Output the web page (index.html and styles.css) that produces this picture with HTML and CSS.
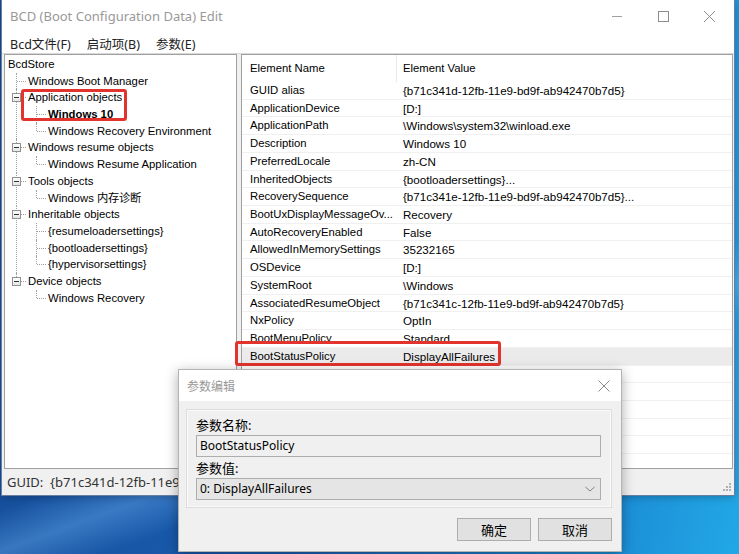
FILE: index.html
```html
<!DOCTYPE html>
<html lang="zh-CN">
<head>
    <meta charset="UTF-8">
    <title>BCD (Boot Configuration Data) Edit</title>
    <link rel="stylesheet" href="styles.css">
</head>
<body>
    <div class="desk">
        <div class="window">
            <div class="titlebar">
                <span class="title">BCD (Boot Configuration Data) Edit</span>
                <div class="caption-btns">
                    <svg width="46" height="32" viewBox="0 0 46 32"><path d="M18 16.5h10" stroke="#a0a0a0" stroke-width="1"/></svg>
                    <svg width="46" height="32" viewBox="0 0 46 32"><rect x="18.5" y="11.5" width="10" height="10" fill="none" stroke="#8c8c8c" stroke-width="1"/></svg>
                    <svg width="46" height="32" viewBox="0 0 46 32"><path d="M18 11l11 11M29 11L18 22" stroke="#8c8c8c" stroke-width="1"/></svg>
                </div>
            </div>
            <div class="menubar">
                <span>Bcd文件(F)</span>
                <span>启动项(B)</span>
                <span>参数(E)</span>
            </div>
            <div class="main">
                <div class="tree">
                    <div class="root">BcdStore</div>
                    <ul>
                        <li><span class="lbl">Windows Boot Manager</span></li>
                        <li><i class="exp"></i><span class="lbl">Application objects</span>
                            <ul>
                                <li><span class="lbl bold">Windows 10</span></li>
                                <li><span class="lbl">Windows Recovery Environment</span></li>
                            </ul>
                        </li>
                        <li><i class="exp"></i><span class="lbl">Windows resume objects</span>
                            <ul>
                                <li><span class="lbl">Windows Resume Application</span></li>
                            </ul>
                        </li>
                        <li><i class="exp"></i><span class="lbl">Tools objects</span>
                            <ul>
                                <li><span class="lbl">Windows 内存诊断</span></li>
                            </ul>
                        </li>
                        <li><i class="exp"></i><span class="lbl">Inheritable objects</span>
                            <ul>
                                <li><span class="lbl">{resumeloadersettings}</span></li>
                                <li><span class="lbl">{bootloadersettings}</span></li>
                                <li><span class="lbl">{hypervisorsettings}</span></li>
                            </ul>
                        </li>
                        <li><i class="exp"></i><span class="lbl">Device objects</span>
                            <ul>
                                <li><span class="lbl">Windows Recovery</span></li>
                            </ul>
                        </li>
                    </ul>
                </div>
                <div class="list">
                    <div class="lrow lhead"><span class="c1">Element Name</span><span class="c2">Element Value</span></div>
                    <div class="lrow"><span class="c1">GUID alias</span><span class="c2">{b71c341d-12fb-11e9-bd9f-ab942470b7d5}</span></div>
                    <div class="lrow"><span class="c1">ApplicationDevice</span><span class="c2">[D:]</span></div>
                    <div class="lrow"><span class="c1">ApplicationPath</span><span class="c2">\Windows\system32\winload.exe</span></div>
                    <div class="lrow"><span class="c1">Description</span><span class="c2">Windows 10</span></div>
                    <div class="lrow"><span class="c1">PreferredLocale</span><span class="c2">zh-CN</span></div>
                    <div class="lrow"><span class="c1">InheritedObjects</span><span class="c2">{bootloadersettings}...</span></div>
                    <div class="lrow"><span class="c1">RecoverySequence</span><span class="c2">{b71c341e-12fb-11e9-bd9f-ab942470b7d5}...</span></div>
                    <div class="lrow"><span class="c1">BootUxDisplayMessageOv...</span><span class="c2">Recovery</span></div>
                    <div class="lrow"><span class="c1">AutoRecoveryEnabled</span><span class="c2">False</span></div>
                    <div class="lrow"><span class="c1">AllowedInMemorySettings</span><span class="c2">35232165</span></div>
                    <div class="lrow"><span class="c1">OSDevice</span><span class="c2">[D:]</span></div>
                    <div class="lrow"><span class="c1">SystemRoot</span><span class="c2">\Windows</span></div>
                    <div class="lrow"><span class="c1">AssociatedResumeObject</span><span class="c2">{b71c341c-12fb-11e9-bd9f-ab942470b7d5}</span></div>
                    <div class="lrow"><span class="c1">NxPolicy</span><span class="c2">OptIn</span></div>
                    <div class="lrow"><span class="c1">BootMenuPolicy</span><span class="c2">Standard</span></div>
                    <div class="lrow sel"><span class="c1">BootStatusPolicy</span><span class="c2">DisplayAllFailures</span></div>
                    <div class="lrow"><span class="c1">HvPlatformCheck</span><span class="c2">True</span></div>
                    <div class="lrow"><span class="c1"></span><span class="c2"></span></div>
                    <div class="lrow"><span class="c1"></span><span class="c2"></span></div>
                    <div class="lrow"><span class="c1"></span><span class="c2"></span></div>
                    <div class="lrow"><span class="c1"></span><span class="c2"></span></div>
                    <div class="lrow"><span class="c1"></span><span class="c2"></span></div>
                </div>
            </div>
            <div class="status">
                <span class="guid">GUID:&nbsp;&nbsp;{b71c341d-12fb-11e9-bd9f-ab942470b7d5}</span>
                <svg class="grip" width="10" height="10" viewBox="0 0 10 10">
                    <rect x="7" y="1" width="2" height="2" fill="#b0b0b0"/>
                    <rect x="4" y="4" width="2" height="2" fill="#b0b0b0"/>
                    <rect x="7" y="4" width="2" height="2" fill="#b0b0b0"/>
                    <rect x="1" y="7" width="2" height="2" fill="#b0b0b0"/>
                    <rect x="4" y="7" width="2" height="2" fill="#b0b0b0"/>
                    <rect x="7" y="7" width="2" height="2" fill="#b0b0b0"/>
                </svg>
            </div>
        </div>

        <div class="mark mark-tree"></div>
        <div class="mark mark-row"></div>

        <div class="dialog">
            <div class="dlg-title">
                <span>参数编辑</span>
                <svg width="14" height="14" viewBox="0 0 14 14"><path d="M1.5 1.5l11 11M12.5 1.5l-11 11" stroke="#8a8a8a" stroke-width="1"/></svg>
            </div>
            <div class="dlg-body">
                <div class="group">
                    <div class="fld-label">参数名称:</div>
                    <div class="textbox">BootStatusPolicy</div>
                    <div class="fld-label">参数值:</div>
                    <div class="combo">
                        <span>0: DisplayAllFailures</span>
                        <svg width="12" height="8" viewBox="0 0 12 8"><path d="M1.5 2l4.5 4 4.5-4" fill="none" stroke="#808080" stroke-width="1"/></svg>
                    </div>
                </div>
                <div class="buttons">
                    <button class="btn">确定</button>
                    <button class="btn">取消</button>
                </div>
            </div>
        </div>
    </div>
</body>
</html>
```

FILE: styles.css
```css
html, body { margin: 0; padding: 0; }
body {
    width: 739px;
    height: 554px;
    overflow: hidden;
    background:
        linear-gradient(160deg, transparent 62%, rgba(120,190,255,0.35) 67%, transparent 72%),
        linear-gradient(100deg, #164c98 0%, #195db0 45%, #1a86d2 80%, #22a8e6 100%);
    font-family: "Liberation Sans", Arial, sans-serif;
}
.desk { position: relative; width: 739px; height: 554px; }

/* main window */
.window {
    margin-left: 2px;
    width: 732px;
    background: #f0f0f0;
    box-shadow: 0 0 0 1px #6a7fa0, 0 2px 8px #0004;
}
.titlebar {
    height: 33px;
    background: #fff;
    display: flex;
    align-items: center;
    justify-content: space-between;
}
.title {
    padding-left: 8px;
    font-family: "Noto Sans", "Noto Sans CJK SC", sans-serif;
    font-size: 13px;
    color: #999;
    margin-top: -1px;
}
.caption-btns { display: flex; align-self: flex-start; margin-right: 2px; }
.caption-btns svg { display: block; }

.menubar {
    height: 20px;
    background: #fff;
    display: flex;
    align-items: center;
    gap: 16px;
    padding-left: 8px;
    font-family: "Noto Sans", "Noto Sans CJK SC", sans-serif;
    font-size: 12.5px;
    color: #222;
    border-bottom: 1px solid #d8d8d8;
}

.main {
    display: flex;
    gap: 4px;
    height: 415px;
    padding-left: 2px;
    padding-right: 1px;
    box-sizing: border-box;
}

/* tree */
.tree {
    width: 233px;
    box-sizing: border-box;
    background: #fff;
    border: 1px solid #a0a0a0;
    padding-top: 1px;
    font-size: 11.3px;
    color: #000;
    overflow: hidden;
}
.tree .root { padding-left: 3px; height: 16.7px; line-height: 16.7px; }
.tree ul { list-style: none; margin: 0; padding: 0; }
.tree > ul { margin-left: 11px; }
.tree li { position: relative; padding-left: 12px; }
.tree li::before {
    content: "";
    position: absolute;
    left: 0; top: 0; bottom: 0;
    border-left: 1px dotted #a0a0a0;
}
.tree li:last-child::before { bottom: auto; height: 8px; }
.tree li::after {
    content: "";
    position: absolute;
    left: 1px; top: 8px;
    width: 9px;
    border-top: 1px dotted #a0a0a0;
}
.tree li ul { margin-left: 8px; }
.tree .lbl { display: block; height: 16.7px; line-height: 16.7px; white-space: nowrap; }
.tree .bold { font-weight: bold; }
.exp {
    position: absolute;
    left: -4px; top: 4px;
    width: 9px; height: 9px;
    box-sizing: border-box;
    border: 1px solid #919191;
    background: linear-gradient(#fff, #e6e6e6);
    z-index: 1;
}
.exp::after {
    content: "";
    position: absolute;
    left: 1px; right: 1px; top: 3px;
    height: 1px;
    background: #333;
}

/* list */
.list {
    flex: 1;
    background: #fff;
    border: 1px solid #a0a0a0;
    font-size: 11.3px;
    color: #000;
    overflow: hidden;
}
.lrow {
    display: grid;
    grid-template-columns: 155px 1fr;
    height: 17.73px;
    line-height: 17.73px;
    box-sizing: border-box;
    border-bottom: 1px solid #f0f0f0;
    white-space: nowrap;
}
.lrow .c1 { padding-left: 8px; overflow: hidden; }
.lrow .c2 { padding-left: 6px; overflow: hidden; font-size: 11.6px; }
.lhead { height: 27px; line-height: 27px; border-bottom: none; }
.lhead .c1 { border-right: 1px solid #e8e8e8; }
.lhead .c2 { font-size: 11.3px; }
.lrow.sel { background: #ebebeb; }

.status {
    height: 26px;
    display: flex;
    align-items: center;
    justify-content: space-between;
    padding-left: 5px;
    font-family: "Noto Sans", sans-serif;
    font-size: 13px;
    color: #333;
}
.guid { width: 171px; overflow: hidden; white-space: nowrap; }
.grip { align-self: flex-end; margin: 0 2px 3px 0; }

/* annotation boxes */
.mark {
    position: absolute;
    box-sizing: border-box;
    border: 3px solid #e2342c;
    border-radius: 3px;
}
.mark-tree { left: 21px; top: 89px; width: 106px; height: 32px; }
.mark-row { left: 235px; top: 341px; width: 266px; height: 25px; }

/* dialog */
.dialog {
    position: absolute;
    left: 178px; top: 369px;
    width: 444px; height: 183px;
    box-sizing: border-box;
    border: 1px solid #b4b4b4;
    background: #f0f0f0;
    box-shadow: 0 3px 12px #0005;
    font-family: "Noto Sans", "Noto Sans CJK SC", sans-serif;
}
.dlg-title {
    height: 31px;
    background: #fff;
    display: flex;
    align-items: center;
    justify-content: space-between;
    padding: 0 10px 0 8px;
    font-size: 12px;
    color: #999;
}
.dlg-body { padding: 8px 9px 0 7px; }
.group {
    border: 1px solid #dcdcdc;
    box-shadow: inset 0 0 0 1px #fafafa;
    padding: 6px 10px 7px 9px;
}
.fld-label { font-size: 13px; color: #000; line-height: 18px; }
.textbox, .combo {
    height: 22px;
    box-sizing: border-box;
    border: 1px solid #adadad;
    padding-left: 3px;
    font-size: 12px;
    line-height: 20px;
    color: #000;
}
.textbox { background: #f0f0f0; margin: 1px 0 2px; }
.combo {
    background: #e5e5e5;
    margin-top: 1px;
    display: flex;
    justify-content: space-between;
    align-items: center;
    padding-right: 4px;
}
.buttons {
    display: flex;
    justify-content: flex-end;
    gap: 7px;
    padding-top: 10px;
}
.btn {
    width: 74px; height: 23px;
    border: 1px solid #adadad;
    background: #e1e1e1;
    font-family: "Noto Sans CJK SC", sans-serif;
    font-size: 13px;
    color: #000;
    padding: 0;
}
```
